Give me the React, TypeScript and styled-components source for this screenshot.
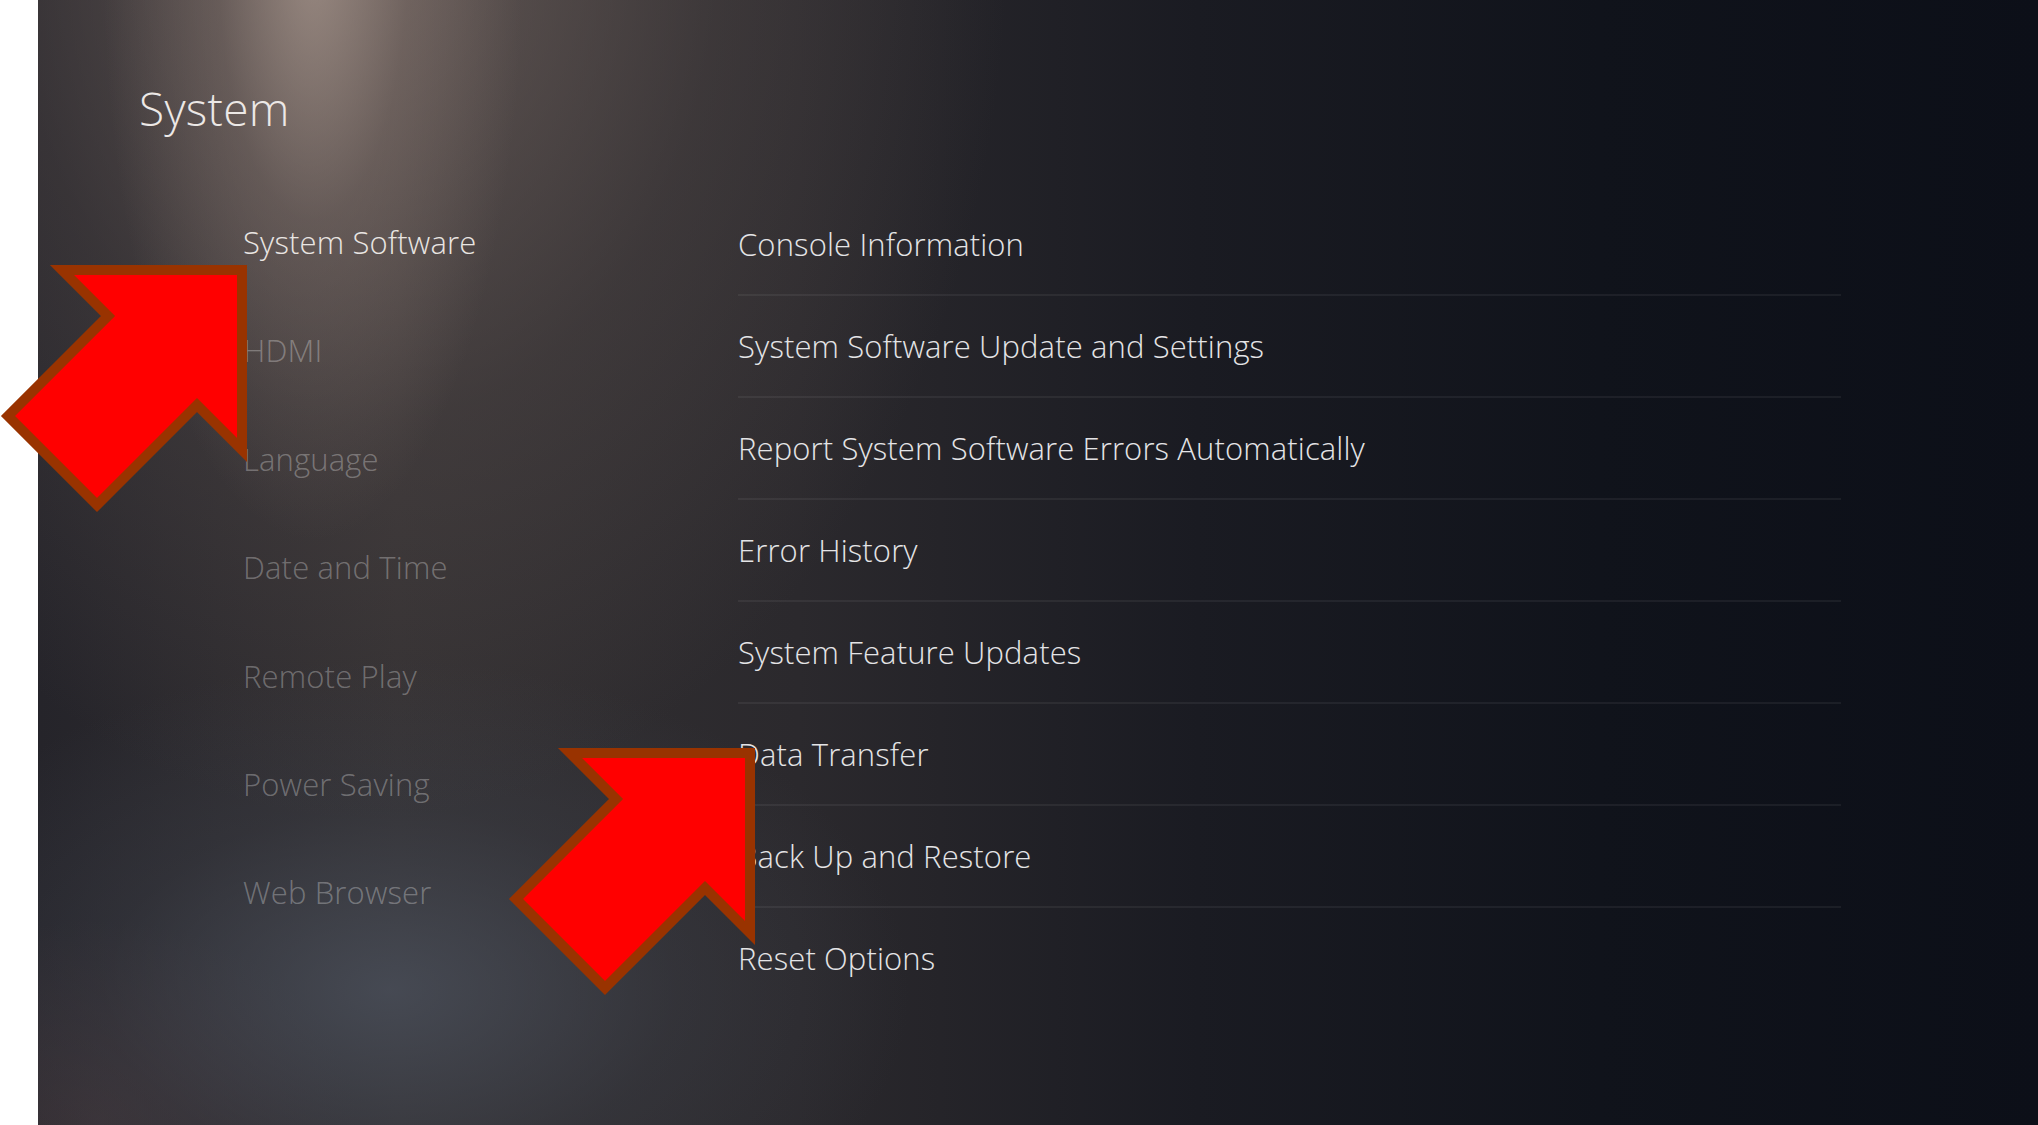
import React from "react";
import styled, { createGlobalStyle } from "styled-components";

const GlobalStyle = createGlobalStyle`
  html, body {
    margin: 0;
    padding: 0;
    background: #ffffff;
    overflow: hidden;
  }
  * { box-sizing: border-box; }
`;

const Page = styled.div`
  position: relative;
  display: flex;
  width: 100vw;
  height: 100vh;
  background: #ffffff;
  font-family: "Open Sans", "Noto Sans", "Liberation Sans", sans-serif;
`;

const WhiteStrip = styled.div`
  flex: 0 0 38px;
  background: #ffffff;
`;

const Screen = styled.main`
  flex: 1;
  display: flex;
  flex-direction: column;
  padding-left: 101px;
  overflow: hidden;
  background:
    radial-gradient(ellipse 210px 580px at 275px -40px, rgba(176, 158, 148, 0.7), rgba(150, 132, 124, 0.32) 45%, rgba(120, 105, 100, 0) 100%),
    radial-gradient(ellipse 640px 880px at 330px -60px, rgba(118, 104, 99, 0.72), rgba(90, 80, 78, 0.35) 55%, rgba(70, 62, 62, 0) 100%),
    radial-gradient(ellipse 520px 330px at 352px 990px, rgba(76, 82, 94, 0.75), rgba(62, 66, 76, 0.35) 55%, rgba(50, 52, 60, 0) 100%),
    radial-gradient(ellipse 260px 200px at 60px 1120px, rgba(70, 55, 58, 0.6), rgba(60, 50, 52, 0) 100%),
    linear-gradient(to right, #25242a 0%, #333032 18%, #2b292d 38%, #1a1b22 58%, #10131b 78%, #0c0f18 100%);
`;

const Title = styled.h1`
  margin: 78px 0 0 0;
  font-size: 46px;
  line-height: 60px;
  font-weight: 300;
  letter-spacing: 0.3px;
  color: #ece8e6;
`;

const Body = styled.div`
  display: flex;
  margin-top: 50px;
`;

const LeftMenu = styled.nav`
  flex: 0 0 599px;
  display: flex;
  flex-direction: column;
  padding-left: 104px;
`;

const MenuItem = styled.div<{ $active?: boolean }>`
  font-size: 31px;
  line-height: 108.4px;
  height: 108.4px;
  font-weight: 300;
  letter-spacing: 0.15px;
  white-space: nowrap;
  color: ${(p) => (p.$active ? "#e9e5e2" : "rgba(255, 255, 255, 0.3)")};
`;

const RightList = styled.section`
  flex: 0 0 1103px;
  display: flex;
  flex-direction: column;
  margin-top: 6px;
`;

const Row = styled.div<{ $last?: boolean }>`
  height: ${(p) => (p.$last ? "100px" : "102px")};
  line-height: 100px;
  font-size: 31px;
  font-weight: 300;
  letter-spacing: 0.12px;
  color: #e4e4e6;
  white-space: nowrap;
  border-bottom: ${(p) => (p.$last ? "none" : "2px solid rgba(255, 255, 255, 0.06)")};
`;

const ArrowWrap = styled.div<{ $x: number; $y: number }>`
  position: absolute;
  left: ${(p) => p.$x}px;
  top: ${(p) => p.$y}px;
  width: 244px;
  height: 250px;
  pointer-events: none;
  svg { overflow: visible; display: block; }
`;

const Arrow: React.FC<{ x: number; y: number }> = ({ x, y }) => (
  <ArrowWrap $x={x} $y={y}>
    <svg width="244" height="250" viewBox="0 0 244 250">
      <polygon
        points="59,5 239,5 239,185 194,140 94,240 5,151 105,51"
        fill="#ff0000"
        stroke="#993300"
        strokeWidth="10"
        strokeLinejoin="miter"
        strokeMiterlimit="10"
      />
    </svg>
  </ArrowWrap>
);

const menu = [
  "System Software",
  "HDMI",
  "Language",
  "Date and Time",
  "Remote Play",
  "Power Saving",
  "Web Browser",
];

const items = [
  "Console Information",
  "System Software Update and Settings",
  "Report System Software Errors Automatically",
  "Error History",
  "System Feature Updates",
  "Data Transfer",
  "Back Up and Restore",
  "Reset Options",
];

export default function App() {
  return (
    <>
      <GlobalStyle />
      <Page>
        <WhiteStrip />
        <Screen>
          <Title>System</Title>
          <Body>
            <LeftMenu>
              {menu.map((m, i) => (
                <MenuItem key={m} $active={i === 0}>
                  {m}
                </MenuItem>
              ))}
            </LeftMenu>
            <RightList>
              {items.map((t, i) => (
                <Row key={t} $last={i === items.length - 1}>
                  {t}
                </Row>
              ))}
            </RightList>
          </Body>
        </Screen>
        <Arrow x={3} y={265} />
        <Arrow x={511} y={748} />
      </Page>
    </>
  );
}
